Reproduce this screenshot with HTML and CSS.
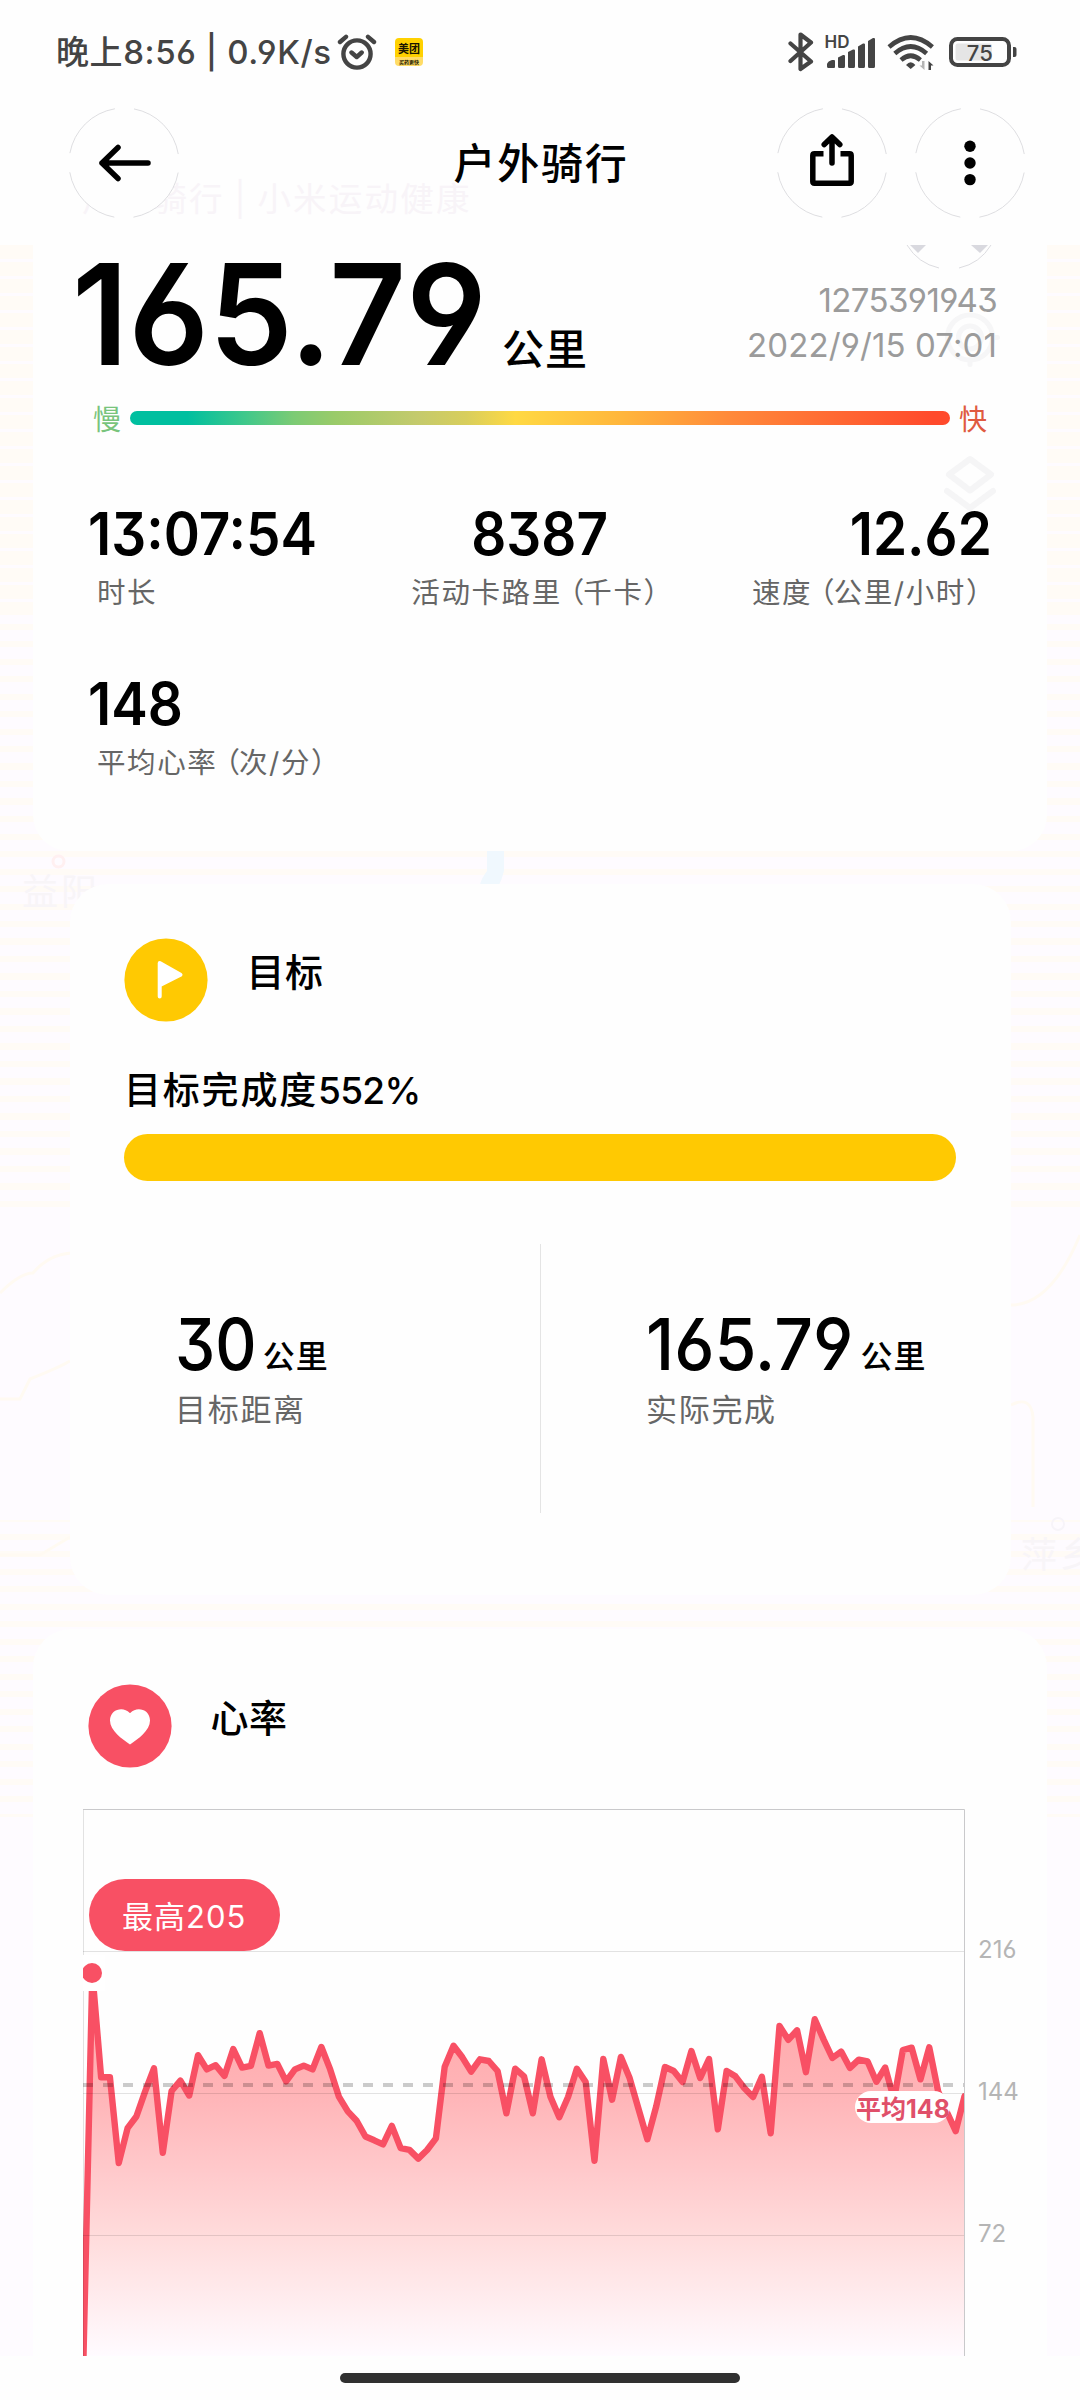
FILE: index.html
```html
<!DOCTYPE html>
<html lang="zh-CN">
<head>
<meta charset="utf-8">
<title>户外骑行</title>
<link rel="stylesheet" href="styles.css">
</head>
<body>
<div class="page">
  <div class="statusbar">
    <div class="status-left">
      <span class="clock">晚上8:56 | 0.9K/s</span>
      <svg class="alarm" width="40" height="36" viewBox="0 0 40 36" fill="none" stroke="#444" stroke-width="4.400" stroke-linecap="round" stroke-linejoin="round"><circle cx="20" cy="20" r="13.600"/><path d="M14.500 18.500l5.200 4.500 5-4.500M3 8l6-5.200M37 8l-6-5.200"/></svg>
      <span class="app-badge"><b>美团</b><i>买药更快</i></span>
    </div>
    <svg class="status-right" width="230" height="42" viewBox="788 31 230 42">
      <path d="M790.500 43.500L811 61.500L800.500 69V34.500L811 42.500L790.500 61" fill="none" stroke="#444" stroke-width="4.200" stroke-linejoin="round" stroke-linecap="round"/>
      <text class="hd" x="824.500" y="48">HD</text>
      <g fill="#444"><path d="M827 66.500v-2.500q1-3 5-4h2q1 0 1 1v6q0 1-1 1h-5.500q-1.500 0-1.500-1.500zM838 57.500l5-2.500q2-.5 2 1v10.500q0 1.500-1.500 1.500h-4q-1.500 0-1.500-1.500zM848 52l5-2.500q2-.5 2 1v16q0 1.500-1.500 1.500h-4q-1.500 0-1.500-1.500zM858 46.500l5-3q2-.5 2 1v22q0 1.500-1.500 1.500h-4q-1.500 0-1.500-1.500zM868 41l5-3q2-.5 2 1v27.500q0 1.500-1.500 1.500h-4q-1.500 0-1.500-1.500z"/><path d="M910.700 69l-4.700-4q4.700-5.500 9.400 0z"/><path d="M928.500 70v-9l5 4.500h-2.500v4.500z"/></g>
      <path d="M924.500 61v9l-5-4.500h2.500v-4.500z" fill="#b5b5b5"/>
      <g fill="none" stroke="#444" stroke-width="4.600"><path d="M889 47q21.700-19 43.400 0M894.800 53.500q15.900-14 31.800 0M901 60q9.700-8.500 19.400 0"/></g>
      <rect x="951" y="39" width="58" height="26" rx="6.500" fill="none" stroke="#444" stroke-width="4"/>
      <rect x="955.500" y="43.500" width="36.500" height="17" rx="2.500" fill="#e5e5e5"/>
      <path d="M1013 47h1.500q2 0 2 2v6q0 2-2 2h-1.500z" fill="#444"/>
      <text class="pct" x="979.800" y="60.700">75</text>
    </svg>
  </div>

  <header class="header">
    <div class="ghost">户外骑行 | 小米运动健康</div>
    <svg class="btn" width="112" height="112" viewBox="-56 -56 112 112"><circle class="disc" r="55"/><path class="glyph" d="M-22 0H24M-6-15.500L-22 0L-6 15.500"/></svg>
    <h1 class="title">户外骑行</h1>
    <div class="actions">
      <svg class="btn" width="112" height="112" viewBox="-56 -56 112 112"><circle class="disc" r="55"/><path class="glyph cut" d="M-8.500-9.200H-17.500Q-19.200-9.200-19.200-7.500V18.500Q-19.200 20.200-17.500 20.200H17.500Q19.200 20.200 19.200 18.500V-7.500Q19.200-9.200 17.500-9.200H8.500"/><path class="glyph" d="M0-25.500V0M-7.800-18.500L0-26L7.800-18.500"/></svg>
      <svg class="btn" width="112" height="112" viewBox="-56 -56 112 112"><circle class="disc" r="55"/><circle cy="-16.700" r="5.700"/><circle r="5.700"/><circle cy="16.600" r="5.700"/></svg>
    </div>
  </header>

  <main class="main">
    <div class="map">
      <span class="place yiyang">益阳</span>
      <span class="place pingxiang">萍乡</span>
      <svg class="map-marks" width="1080" height="2111" fill="none"><circle cx="58.500" cy="616.500" r="5.500" stroke="#fff0f1" stroke-width="3"/><circle cx="1058" cy="1279" r="6" stroke="#f7f4f9" stroke-width="2"/><path d="M487 606h17v20q-2 8-5 14h-19q1-6 7-14z" fill="#f0f8fe"/><path d="M0 1048q20-20 33-20q15-18 38-20M1011 1060q40 0 69-70M1011 1160q20-10 22 12v90M0 1154h20l10-20q30-12 40-18M0 1310h40l30-18" stroke="#fffaf2" stroke-width="3"/></svg>
    </div>

    <section class="card summary">
      <div class="hero">
        <div class="distance"><span class="big">165.79</span><span class="unit">公里</span></div>
        <div class="meta"><div class="user-id">1275391943</div><div class="date">2022/9/15 07:01</div></div>
      </div>
      <div class="pace"><span class="slow">慢</span><div class="pace-bar"></div><span class="fast">快</span></div>
      <div class="stats">
        <div class="stat"><div class="value"><span>13:07:54</span></div><div class="label">时长</div></div>
        <div class="stat mid"><div class="value"><span>8387</span></div><div class="label">活动卡路里<span class="paren">（</span>千卡）</div></div>
        <div class="stat end"><div class="value"><span>12.62</span></div><div class="label">速度<span class="paren">（</span>公里/小时）</div></div>
        <div class="stat"><div class="value"><span>148</span></div><div class="label">平均心率<span class="paren">（</span>次/分）</div></div>
      </div>
      <svg class="overlay" width="1014" height="280" viewBox="33 245 1014 280" fill="none">
        <path d="M907 245A50 50 0 0 0 939 268M959 268A50 50 0 0 0 991 245" stroke="#dcdce0"/>
        <path d="M910 245h16l-8 8zM971 245h17l-8 8z" fill="#d9d9df"/>
        <g stroke="#f6f6f7" stroke-width="5"><circle cx="970" cy="337.500" r="22.500"/><circle cx="970" cy="337.500" r="11.500"/><path d="M970 360v4.500M992 337.500h5.500" stroke-linecap="round"/></g>
        <g stroke="#f5f5f6" stroke-width="6" stroke-linejoin="round" stroke-linecap="round"><path d="M970 459l21 15.500l-21 16l-21-16z"/><path d="M947 491l23 17l23-17"/></g>
      </svg>
    </section>

    <section class="card goal">
      <div class="card-head">
        <svg width="84" height="84" viewBox="-42 -42 84 84"><circle r="41.600" fill="#ffc902"/><path d="M-6.300 16.500V-17L14.500-5.300L-6.300 5.200" fill="#fff" stroke="#fff" stroke-width="4" stroke-linejoin="round" stroke-linecap="round"/></svg>
        <h2>目标</h2>
      </div>
      <div class="goal-text">目标完成度<span>552%</span></div>
      <div class="goal-bar"></div>
      <div class="goal-cols">
        <div class="goal-col"><div class="goal-value"><span class="num narrow">30</span><span class="small-unit">公里</span></div><div class="goal-label">目标距离</div></div>
        <div class="goal-col"><div class="goal-value"><span class="num">165.79</span><span class="small-unit">公里</span></div><div class="goal-label">实际完成</div></div>
      </div>
    </section>

    <section class="card heart">
      <div class="card-head">
        <svg width="84" height="84" viewBox="-42 -42 84 84"><circle r="41.600" fill="#f85064"/><path d="M0 18.500C-8 13-20 4.500-20-5.500C-20-17-6.500-20-0.500-13.200Q0-12.600.5-13.200C6.500-20 20-17 20-5.500C20 4.500 8 13 0 18.500z" fill="#fff"/></svg>
        <h2>心率</h2>
      </div>
      <svg class="chart" width="950" height="547" viewBox="83 9 950 547">
        <defs>
          <linearGradient id="fill" gradientUnits="userSpaceOnUse" x1="0" y1="200" x2="0" y2="556"><stop offset="0" stop-color="#ffa8aa"/><stop offset=".26" stop-color="#ffb4b7"/><stop offset=".5" stop-color="#ffcbcd"/><stop offset=".67" stop-color="#ffdcdc"/><stop offset=".83" stop-color="#ffebed"/><stop offset="1" stop-color="#fffbff"/></linearGradient>
          <clipPath id="plot"><rect x="83" y="0" width="882" height="556"/></clipPath>
        </defs>
        <g clip-path="url(#plot)">
          <polygon fill="url(#fill)" transform="translate(83.500 0) scale(8.810 1)" points="0,556 1,173 2,277.300 3,277.300 4,363 5,328.200 6,316.500 7,291.400 8,268.300 9,352.700 10,291 11,280.700 12,295.500 13,255.200 14,269.400 15,265.200 16,275.900 17,249 18,267.600 19,265.900 20,233.200 21,265.600 22,263.900 23,281.400 24,269.400 25,265.600 26,269.400 27,247 28,269.400 29,296.900 30,311.400 31,320.700 32,336.500 33,340.300 34,344.400 35,325.800 36,348.200 37,349.900 38,358.600 39,350 40,338.300 41,266.700 42,245.700 43,257.300 44,271.700 45,259.300 46,261 47,271 48,313.300 49,268.700 50,276.300 51,313.300 52,259.300 53,296.700 54,317.300 55,297 56,268.700 57,282 58,360.700 59,259 60,299.700 61,257 62,278.300 63,309 64,339.300 65,306.700 66,267 67,271 68,282 69,251 70,278 71,259 72,329.300 73,271 74,276.300 75,288 76,297 77,276.700 78,333.300 79,226 80,239.800 81,230.300 82,272.200 83,219.200 84,239.400 85,258 86,251.600 87,267.900 88,259.600 89,261.500 90,281.700 91,267.500 92,299.500 93,250 94,247.700 95,279.300 96,247.300 97,291.200 98,312 99,331.100 100,296.300 100,556"/>
          <polyline class="line" transform="translate(83.500 0) scale(8.810 1)" points="0,556 1,173 2,277.300 3,277.300 4,363 5,328.200 6,316.500 7,291.400 8,268.300 9,352.700 10,291 11,280.700 12,295.500 13,255.200 14,269.400 15,265.200 16,275.900 17,249 18,267.600 19,265.900 20,233.200 21,265.600 22,263.900 23,281.400 24,269.400 25,265.600 26,269.400 27,247 28,269.400 29,296.900 30,311.400 31,320.700 32,336.500 33,340.300 34,344.400 35,325.800 36,348.200 37,349.900 38,358.600 39,350 40,338.300 41,266.700 42,245.700 43,257.300 44,271.700 45,259.300 46,261 47,271 48,313.300 49,268.700 50,276.300 51,313.300 52,259.300 53,296.700 54,317.300 55,297 56,268.700 57,282 58,360.700 59,259 60,299.700 61,257 62,278.300 63,309 64,339.300 65,306.700 66,267 67,271 68,282 69,251 70,278 71,259 72,329.300 73,271 74,276.300 75,288 76,297 77,276.700 78,333.300 79,226 80,239.800 81,230.300 82,272.200 83,219.200 84,239.400 85,258 86,251.600 87,267.900 88,259.600 89,261.500 90,281.700 91,267.500 92,299.500 93,250 94,247.700 95,279.300 96,247.300 97,291.200 98,312 99,331.100 100,296.300"/>
          <path d="M83 151.500H965M83 293.500H965M83 435.500H965M83.500 9V556" stroke="#000" stroke-opacity=".11" fill="none"/>
          <path d="M83 285H965" stroke="#000" stroke-opacity=".2" stroke-width="4" stroke-dasharray="10 10"/>
          <rect x="83" y="155" width="22" height="36" fill="#fff"/>
          <circle cx="92" cy="173" r="10" fill="#f85064"/>
        </g>
        <path d="M83 9.500H964.500V556" stroke="#c9c9cb" fill="none"/>
        <rect x="89" y="79" width="191" height="72" rx="36" fill="#f85064"/>
        <text class="peak" x="122" y="128">最高205</text>
        <rect x="855" y="291" width="95" height="32" rx="16" fill="#fff"/>
        <text class="avg" x="856" y="317.500">平均148</text>
        <g class="axis"><text x="978" y="158">216</text><text x="978" y="300">144</text><text x="978" y="442">72</text></g>
      </svg>
    </section>
  </main>
  <div class="homebar"><span></span></div>
</div>
</body>
</html>
```
FILE: styles.css
```css
* { box-sizing: border-box; }
body {
  margin: 0;
  background: #fefefe;
  color: #000;
  font-family: Inter, "Noto Sans CJK SC", sans-serif;
  font-feature-settings: "cv03", "cv04", "cv09";
}
h1, h2 { margin: 0; font-weight: 500; }
.page { width: 1080px; height: 2400px; display: flex; flex-direction: column; overflow: hidden; background: #fefefe; }

.statusbar { height: 107px; padding: 31px 62px 0 56px; display: flex; justify-content: space-between; align-items: flex-start; color: #444; }
.status-left { display: flex; align-items: center; height: 42px; }
.clock { width: 275px; font-size: 33px; line-height: 42px; letter-spacing: .6px; font-weight: 500; white-space: nowrap; }
.alarm { margin-left: 6px; }
.app-badge { width: 28px; height: 28px; margin-left: 18px; border-radius: 4px; overflow: hidden; background: linear-gradient(#ffd100 68%, #ffdc66 68%); color: #1a1500; display: flex; flex-direction: column; align-items: center; }
.app-badge b { font-size: 11px; line-height: 19px; height: 20px; font-weight: 700; margin-top: 2px; }
.app-badge i { font-size: 5px; line-height: 6px; font-style: normal; font-weight: 700; white-space: nowrap; margin-top: -1px; }
.hd { font-size: 17px; font-weight: 600; fill: #444; }
.pct { font-size: 22px; fill: #444; text-anchor: middle; font-weight: 500; }

.header { position: relative; height: 138px; padding: 0 54px 0 68px; display: grid; grid-template-columns: 244px 1fr 256px; align-items: start; }
.actions { display: flex; justify-content: flex-end; gap: 26px; }
.btn { position: relative; }
.disc { fill: #fefefe; stroke: #d6d6d9; stroke-width: .8; stroke-dasharray: 67.200 19.200; stroke-dashoffset: -9.600; }
.glyph { fill: none; stroke: #000; stroke-width: 5.500; stroke-linecap: round; stroke-linejoin: round; }
.cut { stroke-linecap: butt; }
.title { font-size: 42px; line-height: 113px; letter-spacing: 1.700px; text-align: center; }
.ghost { position: absolute; left: 82px; top: 71px; font-size: 33.500px; line-height: 42px; letter-spacing: 2.200px; word-spacing: -2px; color: #f8f4f8; white-space: nowrap; }

.main { position: relative; height: 2111px; overflow: hidden; }
.map { position: absolute; inset: 0; background:
  linear-gradient(#fefbff, #fefbff) 0 970px / 100% 305px no-repeat,
  linear-gradient(#fefbff, #fefbff) 0 1572px / 100% 539px no-repeat,
  repeating-linear-gradient(#fffbf6 0 14px, #fefbff 14px 17px) 0 0 / 100% 370px no-repeat,
  repeating-linear-gradient(#fefbff 0 11px, #fffbf6 11px 17.500px); }
.map-marks { position: absolute; left: 0; top: 0; }
.place { position: absolute; font-size: 36px; line-height: 40px; letter-spacing: 3px; color: #f8f5f8; white-space: nowrap; }
.yiyang { left: 22px; top: 627px; }
.pingxiang { left: 1021px; top: 1290px; }
.card { position: relative; background: #fefefe; }

.summary { margin: 0 33px; height: 606px; border-radius: 0 0 36px 36px; padding: 0 44px; }
.hero { height: 153px; display: flex; justify-content: space-between; align-items: flex-start; }
.distance { display: flex; }
.big { margin-left: -5px; font-size: 140px; line-height: 138px; font-weight: 600; transform: scaleX(.953); transform-origin: left; }
.unit { font-size: 42px; line-height: 60px; font-weight: 500; margin: 75px 0 0 -5px; letter-spacing: 1px; }
.meta { margin: 33px 6px 0 0; text-align: right; font-size: 33px; line-height: 45px; color: #9b9b9b; position: relative; z-index: 1; }
.user-id { letter-spacing: -.600px; }
.date { letter-spacing: .100px; }
.pace { height: 40px; display: flex; align-items: center; justify-content: space-between; padding: 0 16px; font-size: 28px; }
.pace-bar { width: 820px; height: 14px; border-radius: 7px; background: linear-gradient(90deg, #00bf9f 7%, #3fc88b 14%, #7ccb74 20%, #9acb69 25%, #c4ca6c 35%, #d8ce5c 41%, #ffd943 47%, #ffb63c 60%, #ff8a3a 73%, #ff4a2c 98%); }
.slow { color: #78c47c; }
.fast { color: #e05a41; }
.stats { margin-top: 61px; display: grid; grid-template-columns: 1fr 1fr 1fr; row-gap: 53px; padding: 0 11px; position: relative; z-index: 1; }
.value { font-size: 59px; line-height: 70px; font-weight: 600; }
.value span { display: inline-block; transform: scaleX(.93); transform-origin: left; }
.label { font-size: 28.500px; line-height: 48px; margin-bottom: -1px; letter-spacing: 1.600px; color: #666; padding: 0 9px; white-space: nowrap; }
.paren { margin-left: -6px; letter-spacing: -1px; }
.mid { text-align: center; }
.mid .value span { transform-origin: center; }
.mid .label { padding-left: 14px; }
.end { text-align: right; }
.end .value span { transform-origin: right; }
.end .label { padding-right: 0; margin-right: -4px; }
.overlay { position: absolute; left: 0; top: 0; }

.goal { margin: 33px 69px 0 70px; border-radius: 38px; padding: 54px 55px 82px 54px; }
.card-head { display: flex; align-items: flex-start; gap: 39px; height: 84px; margin-left: -.5px; }
.card-head h2 { font-size: 38px; line-height: 69px; letter-spacing: .5px; }
.goal-text { margin-top: 44px; font-size: 37px; line-height: 50px; letter-spacing: 1.800px; font-weight: 500; }
.goal-text span { letter-spacing: -.700px; }
.goal-bar { margin-top: 18px; height: 47px; border-radius: 24px; background: #ffc902; }
.goal-cols { margin-top: 63px; height: 269px; display: grid; grid-template-columns: 417px 1fr; }
.goal-col { padding: 60px 0 0 51px; }
.goal-col:first-child { border-right: 1px solid #e4e4e4; }
.goal-col:last-child { padding-left: 105px; }
.goal-value { display: flex; }
.num { font-size: 72px; line-height: 79px; height: 80px; font-weight: 500; transform: scaleX(.944); transform-origin: left; }
.narrow { transform: scaleX(.89); }
.small-unit { font-size: 32px; line-height: 50px; margin: 28px 0 0 -5px; font-weight: 500; letter-spacing: 1px; }
.narrow + .small-unit { margin-left: -4px; }
.goal-label { font-size: 31px; line-height: 52px; letter-spacing: 1.700px; color: #666; }

.heart { margin: 34px 33px 0; height: 800px; border-radius: 38px 38px 0 0; padding: 55px 0 0 55px; }
.chart { display: block; margin: 41px 0 0 -5px; }
.line { fill: none; stroke: #f85064; stroke-width: 6.400; stroke-linejoin: round; stroke-linecap: round; vector-effect: non-scaling-stroke; }
.peak { font-size: 31px; fill: #fff; letter-spacing: 1px; }
.avg { font-size: 25px; font-weight: 700; fill: #e0506a; }
.axis { font-size: 24px; fill: #b5b5b5; }

.homebar { flex: 1; display: flex; justify-content: center; align-items: flex-start; padding-top: 17px; }
.homebar span { width: 400px; height: 10px; border-radius: 5px; background: #303030; }
```
